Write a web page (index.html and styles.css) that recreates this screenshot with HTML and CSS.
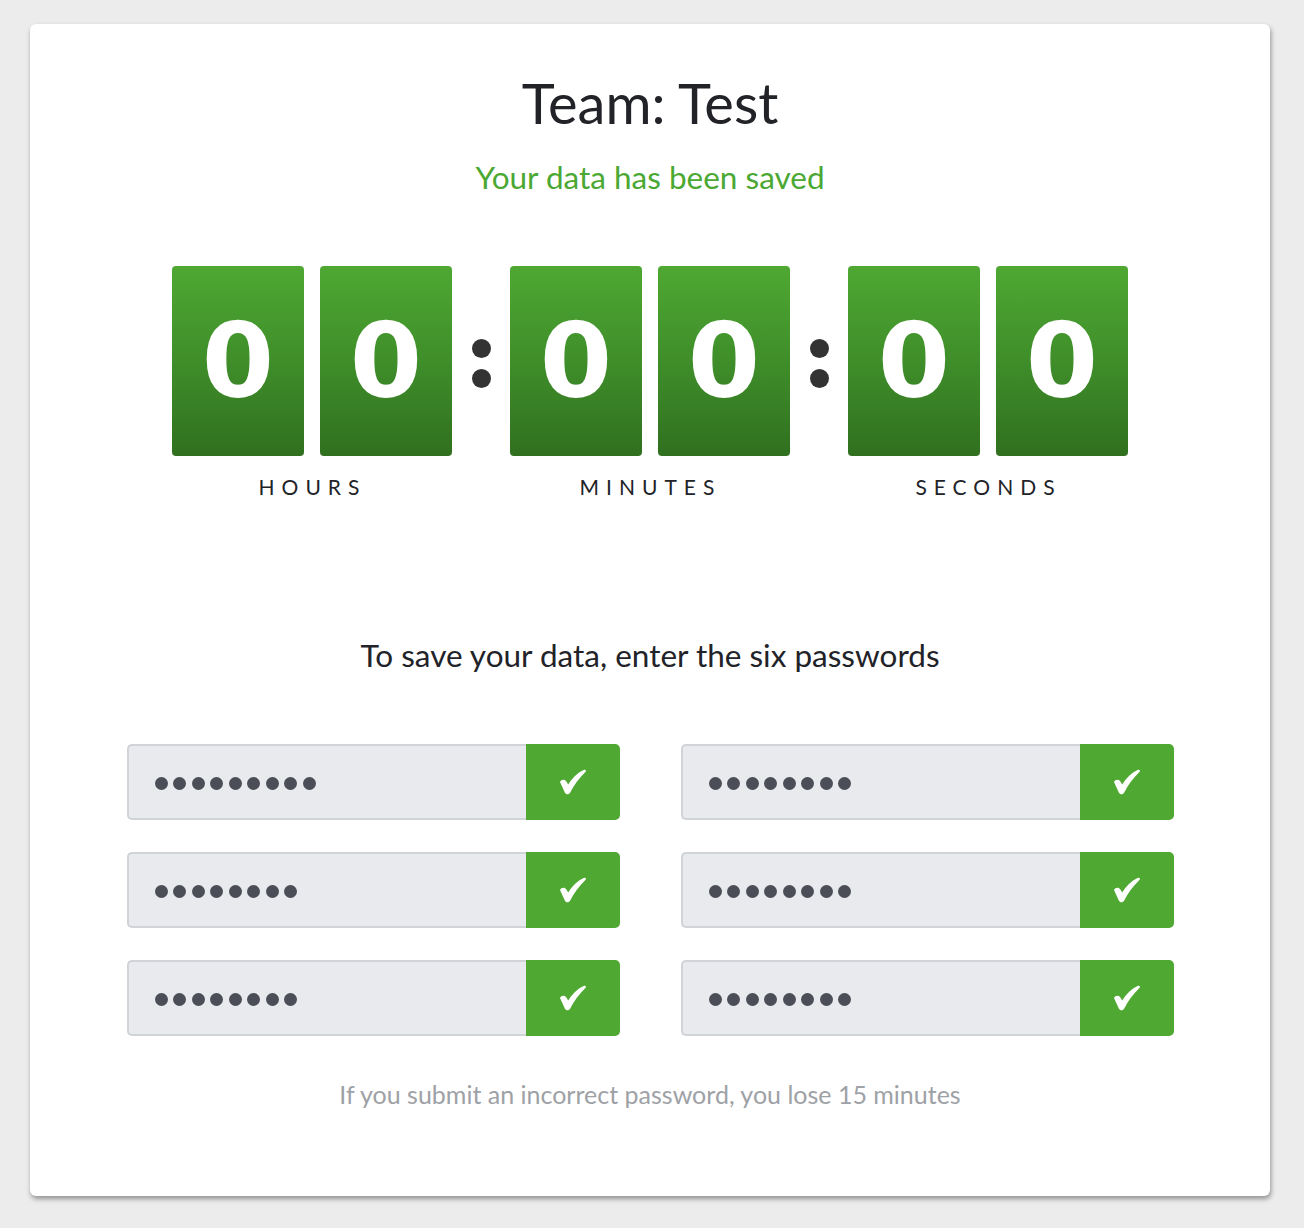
FILE: index.html
```html
<!DOCTYPE html>
<html lang="en">
<head>
<meta charset="utf-8">
<title>Team: Test</title>
<link rel="stylesheet" href="styles.css">
</head>
<body>
<main class="card">
  <h1 class="title">Team: Test</h1>
  <p class="status">Your data has been saved</p>

  <div class="clock">
    <div class="unit">
      <div class="digits"><div class="digit">0</div><div class="digit">0</div></div>
      <div class="label">Hours</div>
    </div>
    <div class="colon"><span></span><span></span></div>
    <div class="unit">
      <div class="digits"><div class="digit">0</div><div class="digit">0</div></div>
      <div class="label">Minutes</div>
    </div>
    <div class="colon"><span></span><span></span></div>
    <div class="unit">
      <div class="digits"><div class="digit">0</div><div class="digit">0</div></div>
      <div class="label">Seconds</div>
    </div>
  </div>

  <p class="prompt">To save your data, enter the six passwords</p>

  <div class="passwords">
    <div class="field">
      <div class="input"><i></i><i></i><i></i><i></i><i></i><i></i><i></i><i></i><i></i></div>
      <button class="ok" type="button" aria-label="Submit"><svg class="check" viewBox="0 0 28 26"><path d="M1 13C2.2 10.4 5.8 10 7.4 12.4L9.2 15.4C13 9.2 18.4 3.8 24.6 0.9C26.4 0.1 27.8 1.6 26.4 3C20.4 9 14.6 16.4 11.2 23.6C10 25.9 7 26 5.8 23.6Z"/></svg></button>
    </div>
    <div class="field">
      <div class="input"><i></i><i></i><i></i><i></i><i></i><i></i><i></i><i></i></div>
      <button class="ok" type="button" aria-label="Submit"><svg class="check" viewBox="0 0 28 26"><path d="M1 13C2.2 10.4 5.8 10 7.4 12.4L9.2 15.4C13 9.2 18.4 3.8 24.6 0.9C26.4 0.1 27.8 1.6 26.4 3C20.4 9 14.6 16.4 11.2 23.6C10 25.9 7 26 5.8 23.6Z"/></svg></button>
    </div>
    <div class="field">
      <div class="input"><i></i><i></i><i></i><i></i><i></i><i></i><i></i><i></i></div>
      <button class="ok" type="button" aria-label="Submit"><svg class="check" viewBox="0 0 28 26"><path d="M1 13C2.2 10.4 5.8 10 7.4 12.4L9.2 15.4C13 9.2 18.4 3.8 24.6 0.9C26.4 0.1 27.8 1.6 26.4 3C20.4 9 14.6 16.4 11.2 23.6C10 25.9 7 26 5.8 23.6Z"/></svg></button>
    </div>
    <div class="field">
      <div class="input"><i></i><i></i><i></i><i></i><i></i><i></i><i></i><i></i></div>
      <button class="ok" type="button" aria-label="Submit"><svg class="check" viewBox="0 0 28 26"><path d="M1 13C2.2 10.4 5.8 10 7.4 12.4L9.2 15.4C13 9.2 18.4 3.8 24.6 0.9C26.4 0.1 27.8 1.6 26.4 3C20.4 9 14.6 16.4 11.2 23.6C10 25.9 7 26 5.8 23.6Z"/></svg></button>
    </div>
    <div class="field">
      <div class="input"><i></i><i></i><i></i><i></i><i></i><i></i><i></i><i></i></div>
      <button class="ok" type="button" aria-label="Submit"><svg class="check" viewBox="0 0 28 26"><path d="M1 13C2.2 10.4 5.8 10 7.4 12.4L9.2 15.4C13 9.2 18.4 3.8 24.6 0.9C26.4 0.1 27.8 1.6 26.4 3C20.4 9 14.6 16.4 11.2 23.6C10 25.9 7 26 5.8 23.6Z"/></svg></button>
    </div>
    <div class="field">
      <div class="input"><i></i><i></i><i></i><i></i><i></i><i></i><i></i><i></i></div>
      <button class="ok" type="button" aria-label="Submit"><svg class="check" viewBox="0 0 28 26"><path d="M1 13C2.2 10.4 5.8 10 7.4 12.4L9.2 15.4C13 9.2 18.4 3.8 24.6 0.9C26.4 0.1 27.8 1.6 26.4 3C20.4 9 14.6 16.4 11.2 23.6C10 25.9 7 26 5.8 23.6Z"/></svg></button>
    </div>
  </div>

  <p class="note">If you submit an incorrect password, you lose 15 minutes</p>
</main>
</body>
</html>
```
FILE: styles.css
```css
* { box-sizing: border-box; }

html, body {
  margin: 0;
  padding: 0;
  background: #ececec;
}

body {
  padding: 24px 34px 32px 30px;
  font-family: Lato, "Open Sans", sans-serif;
  color: #222328;
}

.card {
  width: 1240px;
  height: 1172px;
  background: #fff;
  border-radius: 6px;
  box-shadow: 1px 3px 5px rgba(0, 0, 0, 0.38);
  padding-top: 46px;
  display: flex;
  flex-direction: column;
  align-items: center;
}

.title {
  margin: 0;
  font-size: 56px;
  line-height: 66px;
  font-weight: 400;
  color: #222328;
}

.status {
  margin: 22px 0 0;
  font-size: 31.5px;
  line-height: 38px;
  color: #4ba833;
}

.clock {
  margin-top: 70px;
  display: flex;
  align-items: flex-start;
}

.unit {
  display: flex;
  flex-direction: column;
  align-items: center;
}

.digits {
  display: flex;
  gap: 16px;
}

.digit {
  width: 132px;
  height: 190px;
  border-radius: 4px;
  background: linear-gradient(to bottom, #4ea832 0%, #3f8e2a 50%, #30701f 100%);
  color: #fff;
  font-family: "DejaVu Sans", sans-serif;
  font-weight: 700;
  font-size: 104px;
  line-height: 190px;
  text-align: center;
}

.label {
  margin-top: 19px;
  font-size: 21px;
  line-height: 24px;
  letter-spacing: 7px;
  text-transform: uppercase;
  padding-left: 1px;
  color: #222328;
}

.colon {
  width: 58px;
  height: 190px;
  display: flex;
  flex-direction: column;
  align-items: center;
  justify-content: center;
  gap: 11px;
  padding-top: 4px;
}

.colon span {
  width: 19px;
  height: 19px;
  border-radius: 50%;
  background: #333;
}

.prompt {
  margin: 137px 0 0;
  font-size: 31.5px;
  line-height: 38px;
  color: #222328;
}

.passwords {
  margin-top: 70px;
  display: grid;
  grid-template-columns: 493px 493px;
  column-gap: 61px;
  row-gap: 32px;
}

.field {
  display: flex;
  height: 76px;
}

.input {
  flex: 1;
  background: #e9eaee;
  border: 2px solid #d0d3d8;
  border-right: none;
  border-radius: 5px 0 0 5px;
  display: flex;
  align-items: center;
  gap: 5.5px;
  padding: 2px 0 0 26px;
}

.input i {
  width: 13px;
  height: 13px;
  border-radius: 50%;
  background: #4b4e56;
}

.ok {
  width: 94px;
  height: 76px;
  border: none;
  margin: 0;
  padding: 0;
  background: #4ea832;
  border-radius: 0 5px 5px 0;
  display: flex;
  align-items: center;
  justify-content: center;
}

.check {
  width: 28px;
  height: 26px;
  fill: #fff;
  display: block;
}

.note {
  margin: 43px 0 0;
  font-size: 25px;
  line-height: 30px;
  color: #9ea1a6;
}
```
